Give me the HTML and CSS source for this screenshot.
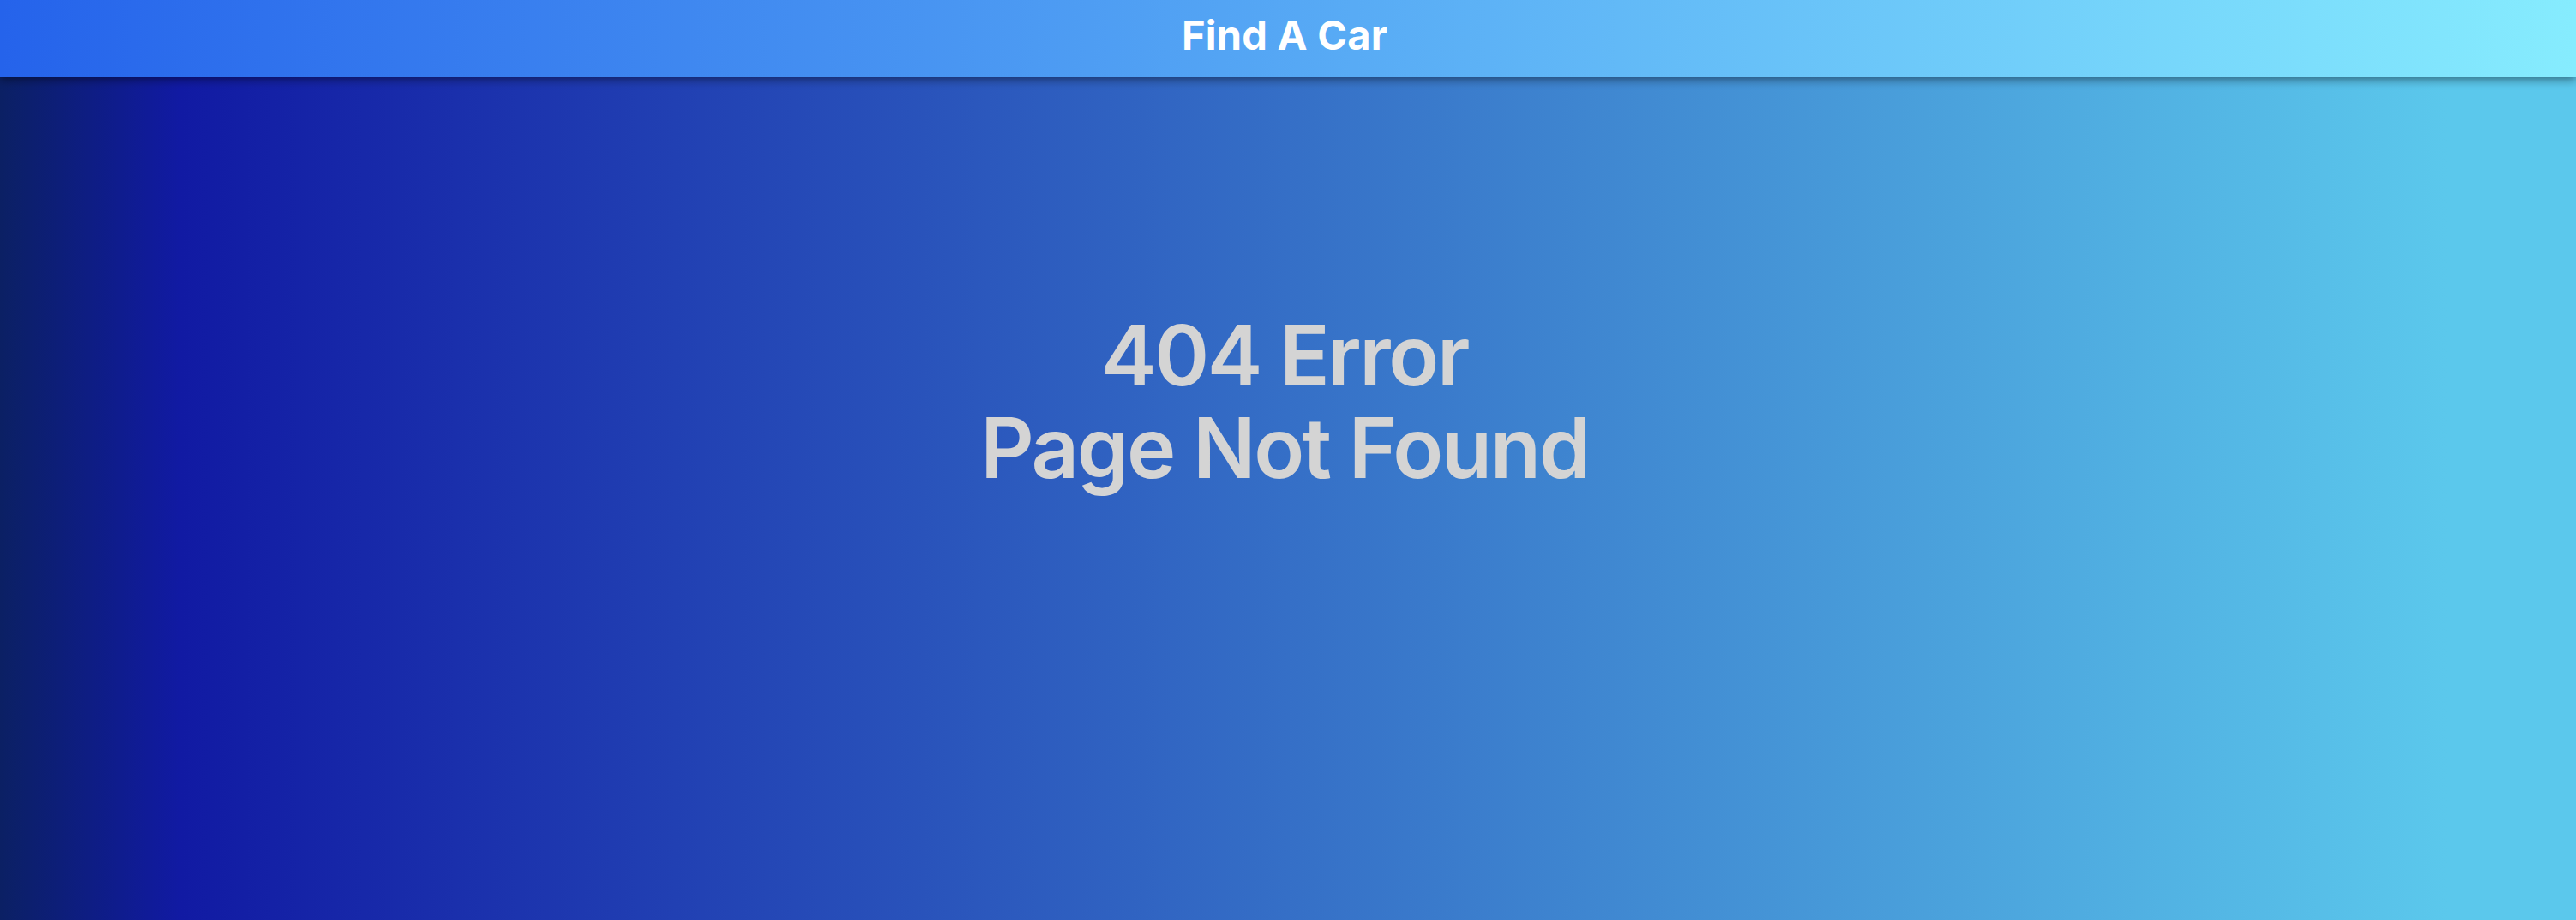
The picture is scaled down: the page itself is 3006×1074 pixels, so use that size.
FILE: index.html
```html
<!DOCTYPE html>
<html lang="en">
<head>
<meta charset="utf-8">
<title>Find A Car</title>
<link rel="stylesheet" href="styles.css">
</head>
<body>
<header class="topbar">
  <h1 class="brand">Find A Car</h1>
</header>
<main class="page">
  <div class="error">
    <p class="error-line">404 Error</p>
    <p class="error-line">Page Not Found</p>
  </div>
</main>
</body>
</html>
```

FILE: styles.css
```css
html, body {
  margin: 0;
  padding: 0;
  height: 100%;
  overflow: hidden;
}
body {
  font-family: Inter, "Noto Sans", "Liberation Sans", sans-serif;
  display: flex;
  flex-direction: column;
}
.topbar {
  position: relative;
  z-index: 2;
  flex: none;
  height: 90px;
  box-sizing: border-box;
  padding-bottom: 10px;
  padding-right: 8px;
  display: flex;
  align-items: center;
  justify-content: center;
  background: linear-gradient(to right, #2563eb, #86ecfe);
  box-shadow: 0 3px 10px rgba(0, 0, 0, 0.45);
}
.brand {
  margin: 0;
  font-size: 47px;
  line-height: 1;
  font-weight: 700;
  letter-spacing: 0.005em;
  color: #ffffff;
}
.page {
  flex: 1;
  min-height: 0;
  background: linear-gradient(to right, #0b2064 0%, #111aa3 7%, #5bc8ec 95%, #5bc8ec 100%);
  padding-top: 271px;
  padding-right: 8px;
  display: flex;
  justify-content: center;
  align-items: flex-start;
}
.error {
  text-align: center;
  color: #d4d4d4;
}
.error-line {
  margin: 0;
  font-size: 97px;
  line-height: 108px;
  font-weight: 600;
  letter-spacing: -0.025em;
}
```
